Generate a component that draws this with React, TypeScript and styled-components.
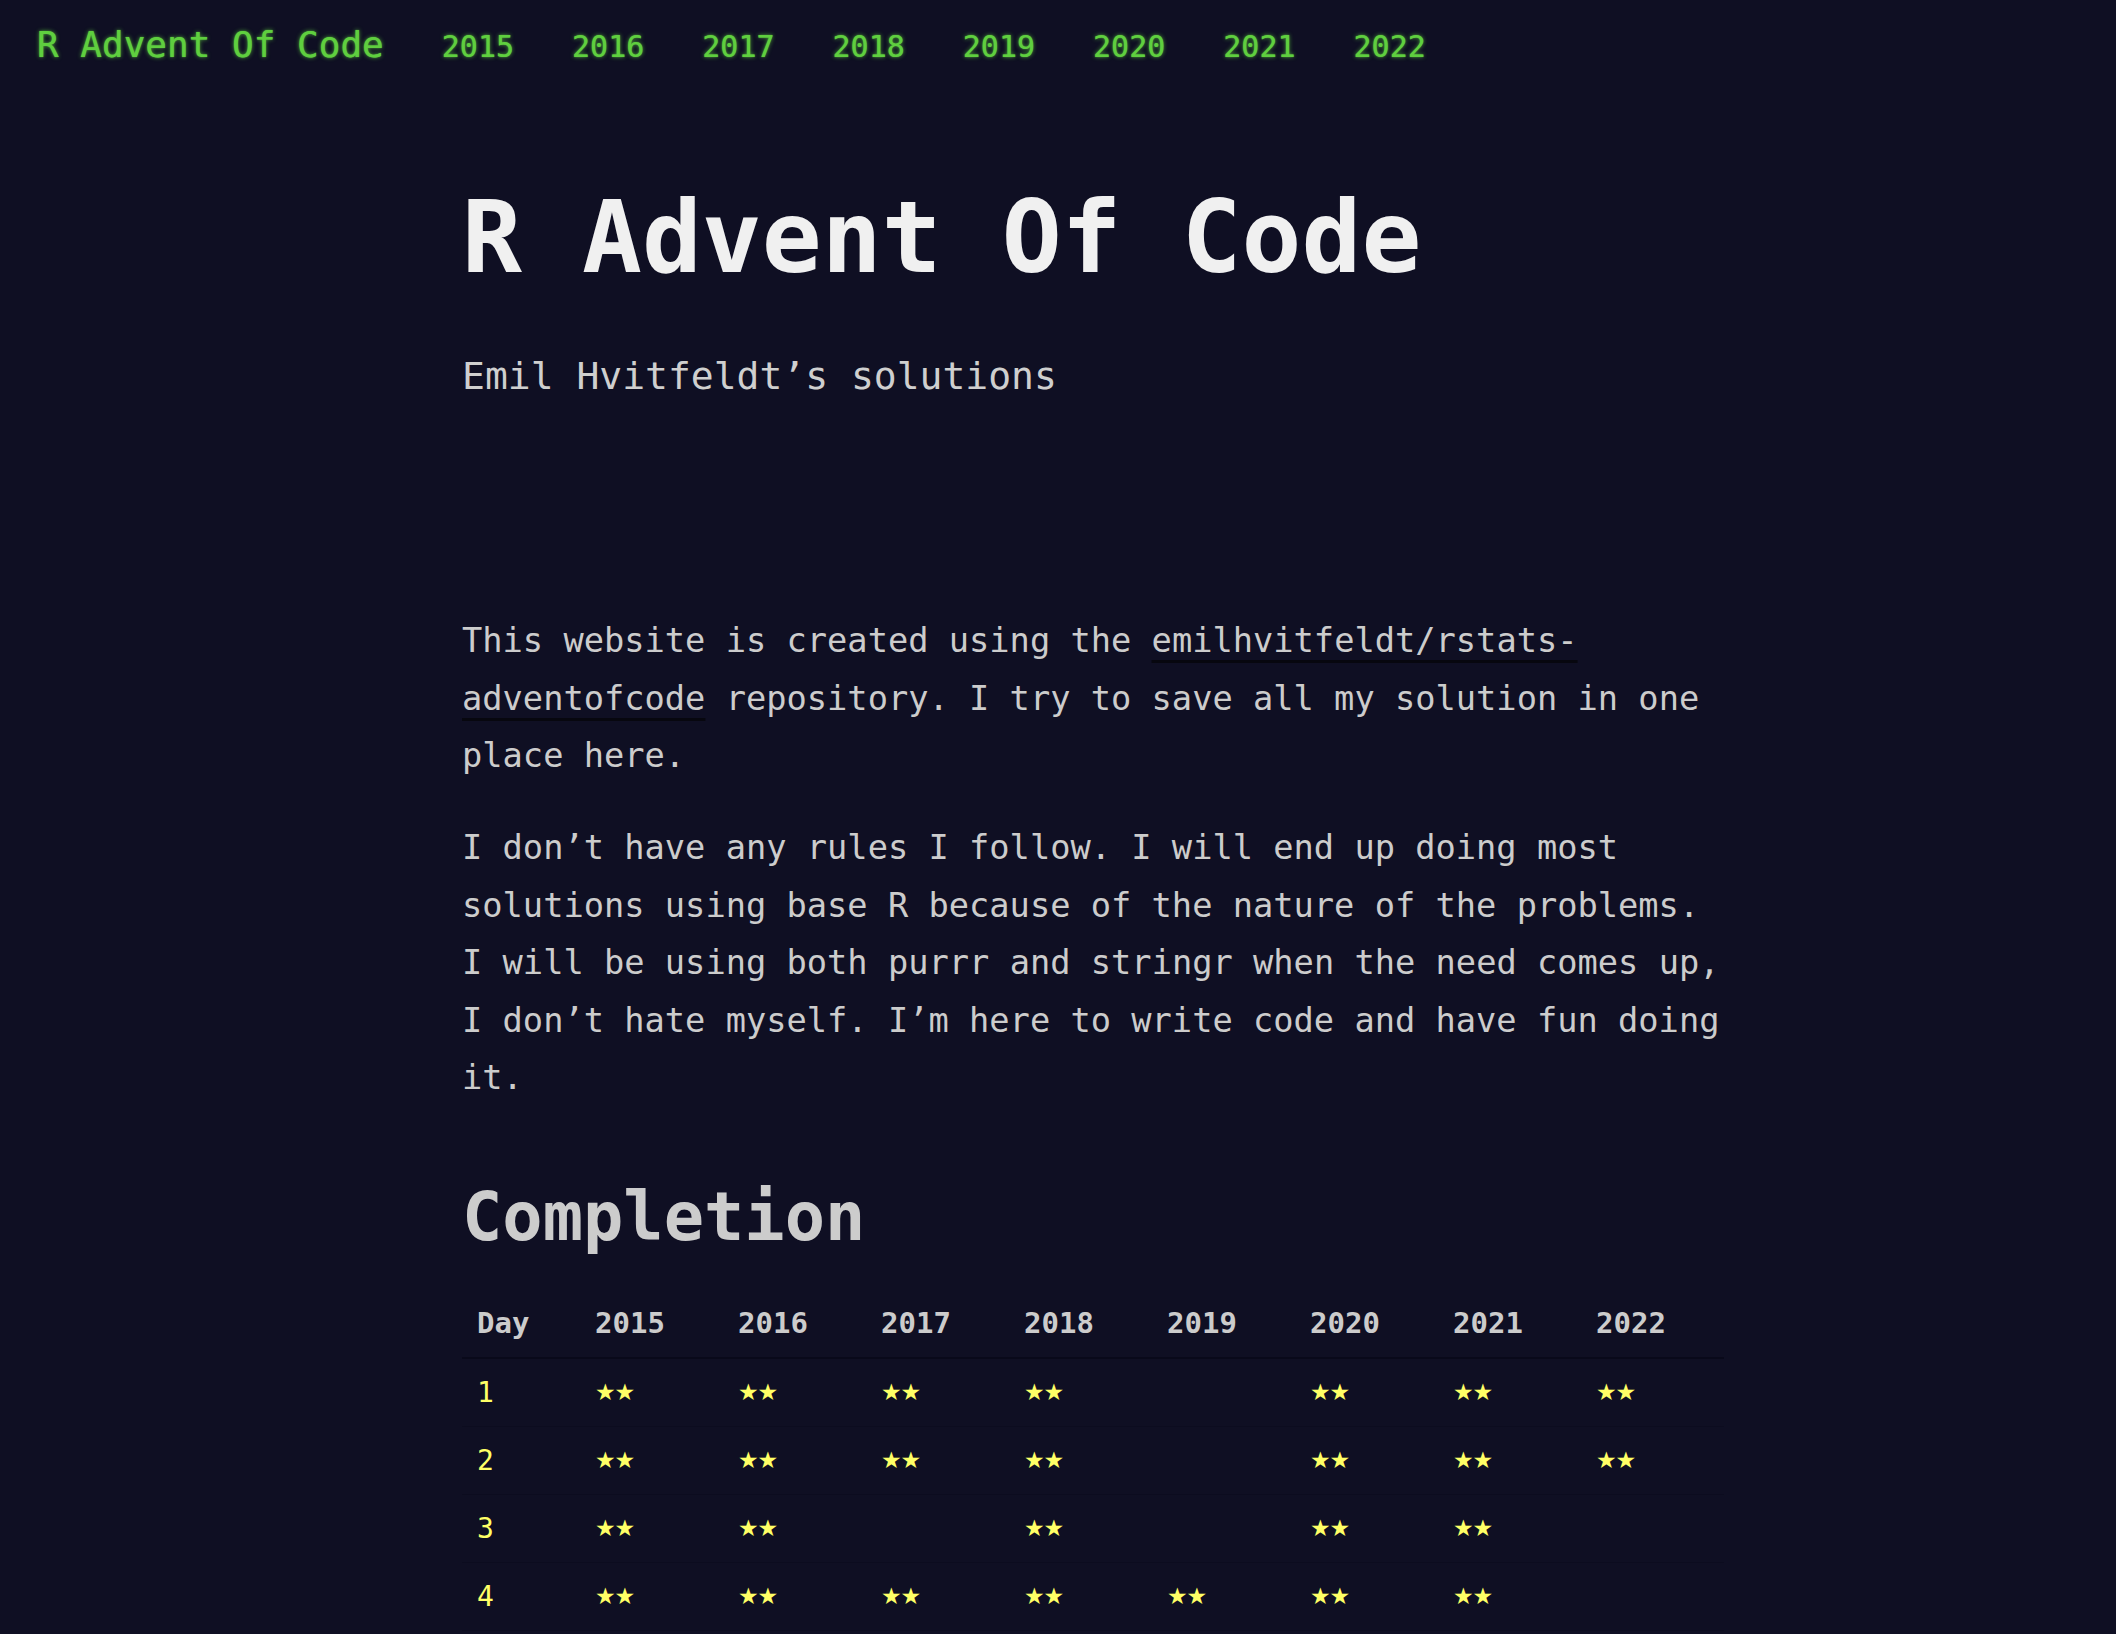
import React from "react";
import styled, { createGlobalStyle } from "styled-components";

const GlobalStyle = createGlobalStyle`
  html, body {
    margin: 0;
    padding: 0;
    background: #0f0f23;
    min-height: 100%;
  }
  body {
    font-family: "DejaVu Sans Mono", "Liberation Mono", monospace;
    color: #cccccc;
  }
`;

const Page = styled.div`
  min-height: 1634px;
  background: #0f0f23;
`;

const NavBar = styled.nav`
  display: flex;
  align-items: baseline;
  gap: 58px;
  padding: 18px 0 0 37px;
  height: 55px;
`;

const NavLink = styled.a<{ $brand?: boolean }>`
  font-family: "DejaVu Sans Mono", monospace;
  font-size: ${(p) => (p.$brand ? "36px" : "30px")};
  line-height: 54px;
  color: #5fcf3f;
  text-decoration: none;
  text-shadow: 0 0 4px rgba(95, 207, 63, 0.75), 0 0 1px rgba(95, 207, 63, 0.9);
  white-space: nowrap;
`;

const Main = styled.main`
  display: grid;
  grid-template-columns: 462px 1262px 1fr;
`;

const Content = styled.article`
  grid-column: 2;
`;

const Title = styled.h1`
  margin: 105px 0 0;
  font-size: 99.6px;
  line-height: 120px;
  font-weight: 700;
  color: #f0f0f0;
  white-space: nowrap;
`;

const Subtitle = styled.p`
  margin: 50px 0 0;
  font-size: 38px;
  line-height: 57px;
  color: #cfcfcf;
`;

const Paragraph = styled.p<{ $first?: boolean }>`
  margin: ${(p) => (p.$first ? "207px" : "34.5px")} 0 0;
  font-size: 33.7px;
  line-height: 57.5px;
  color: #cccccc;
`;

const Link = styled.a`
  color: #cccccc;
  text-decoration: underline;
  text-decoration-color: #07070f;
  text-decoration-thickness: 3px;
  text-underline-offset: 8px;
`;

const Code = styled.code`
  font-family: "DejaVu Sans Mono", monospace;
  font-size: 1em;
  color: #cccccc;
`;

const Heading = styled.h2`
  margin: 70px 0 0;
  font-size: 67px;
  line-height: 80px;
  font-weight: 700;
  color: #cccccc;
`;

const Table = styled.table`
  margin-top: 32px;
  width: 100%;
  border-collapse: collapse;
  table-layout: fixed;
`;

const HeadCell = styled.th<{ $day?: boolean }>`
  width: ${(p) => (p.$day ? "88px" : "auto")};
  padding: 16px 15px;
  line-height: 36px;
  font-size: 29px;
  font-weight: 700;
  text-align: left;
  color: #cccccc;
  border-bottom: 2px solid #09091a;
`;

const Row = styled.tr`
  border-bottom: 1px solid #0c0c1f;
`;

const Cell = styled.td`
  padding: 16px 15px;
  line-height: 35px;
  font-size: 28px;
  color: #ffff66;
  text-align: left;
`;

const Stars = styled.span`
  font-family: "DejaVu Sans", sans-serif;
  font-size: 23px;
  letter-spacing: -1px;
  vertical-align: 2px;
  color: #ffff66;
`;

const years = ["2015", "2016", "2017", "2018", "2019", "2020", "2021", "2022"];

const done: Record<number, string[]> = {
  1: ["2015", "2016", "2017", "2018", "2020", "2021", "2022"],
  2: ["2015", "2016", "2017", "2018", "2020", "2021", "2022"],
  3: ["2015", "2016", "2018", "2020", "2021"],
  4: ["2015", "2016", "2017", "2018", "2019", "2020", "2021"],
};

export default function App() {
  return (
    <Page>
      <GlobalStyle />
      <NavBar>
        <NavLink $brand href="#">R Advent Of Code</NavLink>
        {years.map((y) => (
          <NavLink key={y} href="#">{y}</NavLink>
        ))}
      </NavBar>
      <Main>
        <Content>
          <Title>R Advent Of Code</Title>
          <Subtitle>Emil Hvitfeldt’s solutions</Subtitle>
          <Paragraph $first>
            This website is created using the{" "}
            <Link href="#">emilhvitfeldt/rstats-adventofcode</Link> repository. I try to
            save all my solution in one place here.
          </Paragraph>
          <Paragraph>
            I don’t have any rules I follow. I will end up doing most solutions using base R
            because of the nature of the problems. I will be using both <Code>purrr</Code> and{" "}
            <Code>stringr</Code> when the need comes up, I don’t hate myself. I’m here to write
            code and have fun doing it.
          </Paragraph>
          <Heading>Completion</Heading>
          <Table>
            <thead>
              <tr>
                <HeadCell $day>Day</HeadCell>
                {years.map((y) => (
                  <HeadCell key={y}>{y}</HeadCell>
                ))}
              </tr>
            </thead>
            <tbody>
              {[1, 2, 3, 4].map((d) => (
                <Row key={d}>
                  <Cell>{d}</Cell>
                  {years.map((y) => (
                    <Cell key={y}>{done[d].includes(y) ? <Stars>★★</Stars> : null}</Cell>
                  ))}
                </Row>
              ))}
            </tbody>
          </Table>
        </Content>
      </Main>
    </Page>
  );
}
